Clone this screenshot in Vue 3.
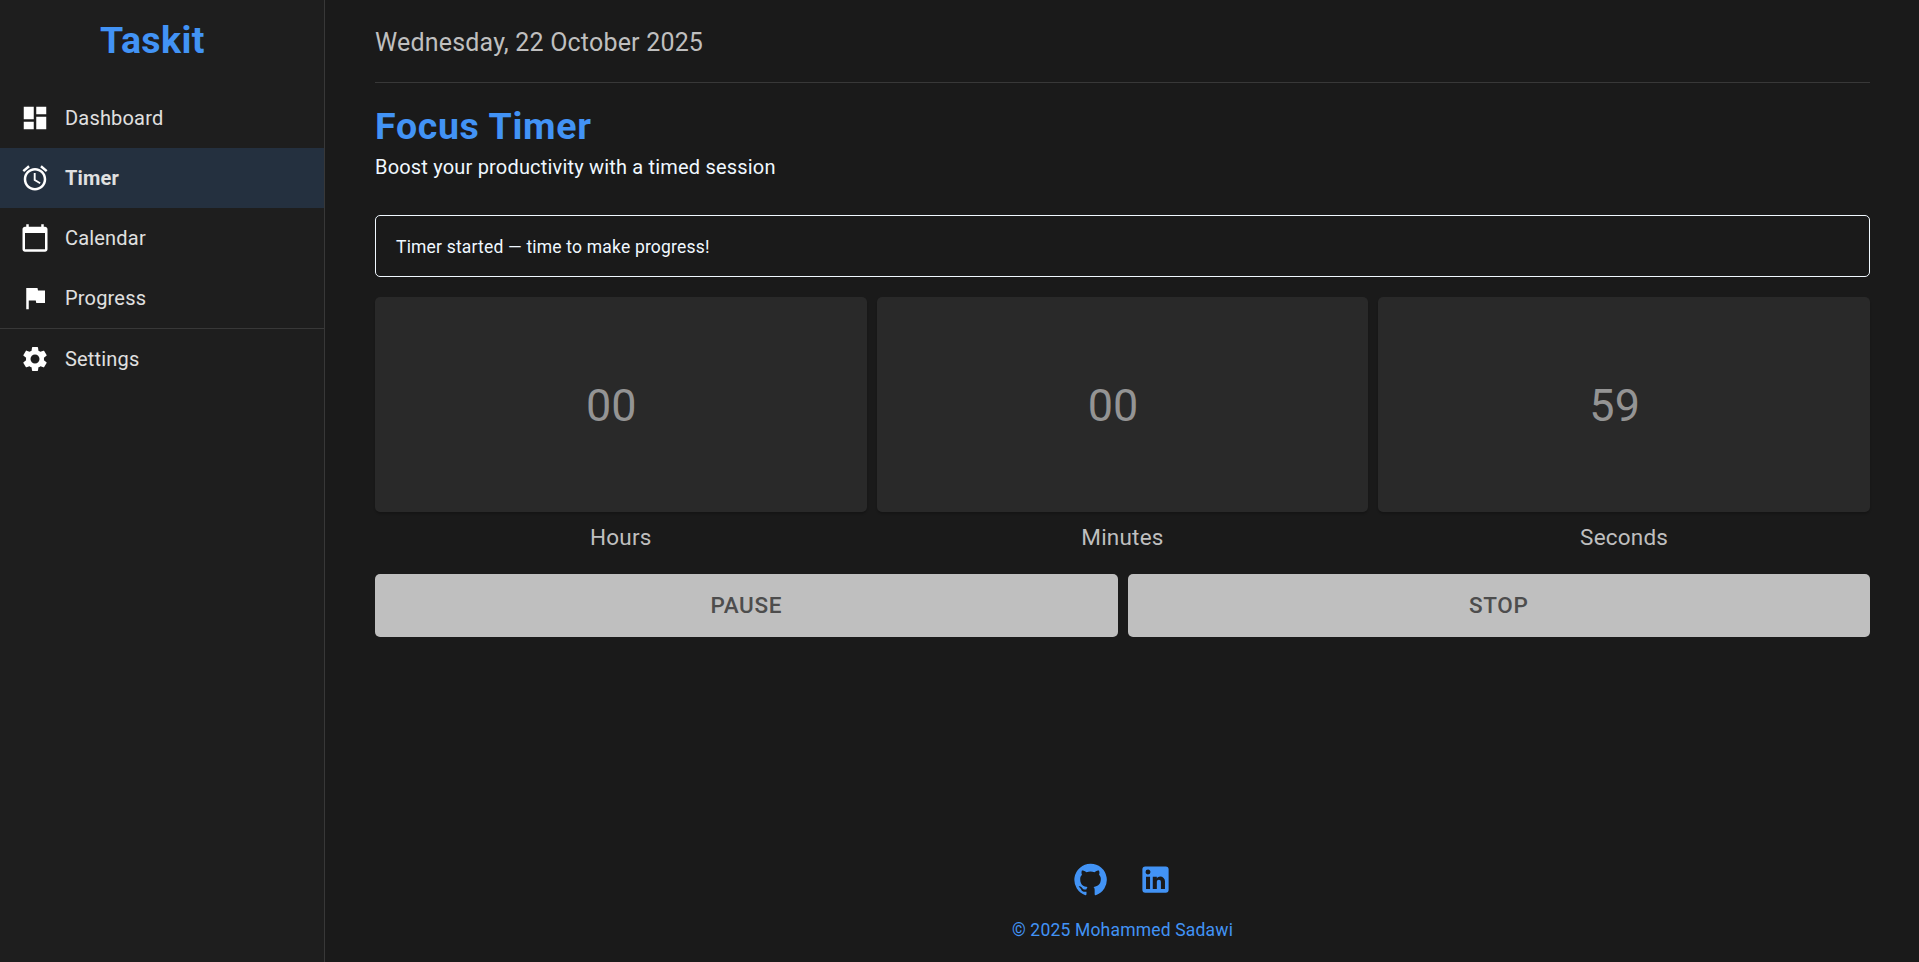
<script setup>
const items = [
  {
    label: 'Dashboard',
    path: 'M3 13h8V3H3zm0 8h8v-6H3zm10 0h8V11h-8zm0-18v6h8V3z',
  },
  {
    label: 'Timer',
    active: true,
    path: 'm22 5.72-4.6-3.86-1.29 1.53 4.6 3.86zM7.88 3.39 6.6 1.86 2 5.71l1.29 1.53zM12.5 8H11v6l4.75 2.85.75-1.23-4-2.37zM12 4c-4.97 0-9 4.03-9 9s4.02 9 9 9c4.97 0 9-4.03 9-9s-4.03-9-9-9m0 16c-3.87 0-7-3.13-7-7s3.13-7 7-7 7 3.13 7 7-3.13 7-7 7',
  },
  {
    label: 'Calendar',
    path: 'M20 3h-1V1h-2v2H7V1H5v2H4c-1.1 0-2 .9-2 2v16c0 1.1.9 2 2 2h16c1.1 0 2-.9 2-2V5c0-1.1-.9-2-2-2m0 18H4V8h16z',
  },
  {
    label: 'Progress',
    path: 'M14.4 6 14 4H5v17h2v-7h5.6l.4 2h7V6z',
  },
  {
    label: 'Settings',
    divided: true,
    path: 'M19.14 12.94c.04-.3.06-.61.06-.94 0-.32-.02-.64-.07-.94l2.03-1.58c.18-.14.23-.41.12-.61l-1.92-3.32c-.12-.22-.37-.29-.59-.22l-2.39.96c-.5-.38-1.03-.7-1.62-.94l-.36-2.54c-.04-.24-.24-.41-.48-.41h-3.84c-.24 0-.43.17-.47.41l-.36 2.54c-.59.24-1.13.57-1.62.94l-2.39-.96c-.22-.08-.47 0-.59.22L2.74 8.87c-.12.21-.08.47.12.61l2.03 1.58c-.05.3-.09.63-.09.94s.02.64.07.94l-2.03 1.58c-.18.14-.23.41-.12.61l1.92 3.32c.12.22.37.29.59.22l2.39-.96c.5.38 1.03.7 1.62.94l.36 2.54c.05.24.24.41.48.41h3.84c.24 0 .44-.17.47-.41l.36-2.54c.59-.24 1.13-.56 1.62-.94l2.39.96c.22.08.47 0 .59-.22l1.92-3.32c.12-.22.07-.47-.12-.61zM12 15.6c-1.98 0-3.6-1.62-3.6-3.6s1.62-3.6 3.6-3.6 3.6 1.62 3.6 3.6-1.62 3.6-3.6 3.6',
  },
]

const units = [
  { label: 'Hours', value: '00' },
  { label: 'Minutes', value: '00' },
  { label: 'Seconds', value: '59' },
]
</script>

<template>
  <div class="app">
    <aside class="sidebar">
      <div class="brand">Taskit</div>
      <nav class="nav">
        <a
          v-for="item in items"
          :key="item.label"
          class="nav-item"
          :class="{ active: item.active, divided: item.divided }"
        >
          <svg class="nav-icon" viewBox="0 0 24 24"><path :d="item.path" /></svg>
          <span>{{ item.label }}</span>
        </a>
      </nav>
    </aside>

    <main class="main">
      <header class="date">Wednesday, 22 October 2025</header>
      <h1 class="title">Focus Timer</h1>
      <p class="subtitle">Boost your productivity with a timed session</p>
      <div class="alert">Timer started — time to make progress!</div>

      <section class="units">
        <div v-for="unit in units" :key="unit.label" class="unit">
          <div class="card">{{ unit.value }}</div>
          <div class="unit-label">{{ unit.label }}</div>
        </div>
      </section>

      <div class="actions">
        <button class="action" type="button">PAUSE</button>
        <button class="action" type="button">STOP</button>
      </div>

      <footer class="footer">
        <div class="social">
          <svg class="social-icon" viewBox="0 0 24 24">
            <path d="M12 1.27a11 11 0 00-3.48 21.46c.55.09.73-.28.73-.55v-1.84c-3.03.64-3.67-1.46-3.67-1.46-.55-1.29-1.28-1.65-1.28-1.65-.92-.65.1-.65.1-.65 1.1 0 1.73 1.1 1.73 1.1.92 1.65 2.57 1.2 3.21.92a2 2 0 01.64-1.47c-2.47-.27-5.04-1.19-5.04-5.5 0-1.1.46-2.1 1.2-2.84a3.76 3.76 0 010-2.93s.91-.28 3.11 1.1c1.8-.49 3.7-.49 5.5 0 2.1-1.38 3.02-1.1 3.02-1.1a3.76 3.76 0 01.1 2.93c.83.74 1.2 1.74 1.2 2.94 0 4.21-2.57 5.13-5.04 5.4.45.37.82.92.82 2.02v3.03c0 .27.1.64.73.55A11 11 0 0012 1.27" />
          </svg>
          <svg class="social-icon" viewBox="0 0 24 24">
            <path d="M19 3a2 2 0 0 1 2 2v14a2 2 0 0 1-2 2H5a2 2 0 0 1-2-2V5a2 2 0 0 1 2-2zm-.5 15.5v-5.3a3.26 3.26 0 0 0-3.26-3.26c-.85 0-1.84.52-2.32 1.3v-1.11h-2.79v8.37h2.79v-4.93c0-.77.62-1.4 1.39-1.4a1.4 1.4 0 0 1 1.4 1.4v4.93zM6.88 8.56a1.68 1.68 0 0 0 1.68-1.68c0-.93-.75-1.69-1.68-1.69a1.69 1.69 0 0 0-1.69 1.69c0 .93.76 1.68 1.69 1.68m1.39 9.94v-8.37H5.5v8.37z" />
          </svg>
        </div>
        <div class="copyright">© 2025 Mohammed Sadawi</div>
      </footer>
    </main>
  </div>
</template>

<style>
body {
  margin: 0;
  background: #1a1a1a;
}
</style>

<style scoped>
.app {
  display: flex;
  height: 100vh;
  box-sizing: border-box;
  overflow: hidden;
  background: #1a1a1a;
  color: #f0f8ff;
  font-family: Roboto, "Liberation Sans", sans-serif;
}

.sidebar {
  flex: none;
  width: 325px;
  box-sizing: border-box;
  border-right: 1px solid #383838;
  background: #1e1e1e;
}

.brand {
  height: 88px;
  padding-left: 100px;
  box-sizing: border-box;
  padding-top: 10px;
  color: #4293f5;
  font-size: 37.5px;
  font-weight: 700;
  line-height: 60px;
  letter-spacing: 0.4px;
}

.nav-item {
  display: flex;
  align-items: center;
  gap: 15px;
  height: 60px;
  padding-left: 20px;
  color: #e0e0e0;
  font-size: 20px;
  letter-spacing: 0.00938em;
}

.nav-item.active {
  background: #24303f;
  font-weight: 700;
}

.nav-item.divided {
  border-top: 1px solid #383838;
}

.nav-icon {
  width: 30px;
  height: 30px;
  fill: #fff;
}

.main {
  flex: 1;
  display: flex;
  flex-direction: column;
  padding: 0 49px 0 50px;
}

.date {
  height: 83px;
  box-sizing: border-box;
  border-bottom: 1px solid #383838;
  color: #bfbfbf;
  font-size: 25px;
  line-height: 86px;
  letter-spacing: 0.0075em;
}

.title {
  margin: 20px 0 0;
  color: #4293f5;
  font-size: 37.5px;
  font-weight: 700;
  line-height: 46px;
  letter-spacing: 0.68px;
}

.subtitle {
  margin: 3px 0 0;
  font-size: 20px;
  line-height: 30px;
  letter-spacing: 0.00938em;
}

.alert {
  margin-top: 33px;
  height: 62px;
  box-sizing: border-box;
  border: 1px solid #f0f8ff;
  border-radius: 5px;
  padding: 0 20px;
  font-size: 17.5px;
  line-height: 62px;
  letter-spacing: 0.01071em;
}

.units {
  display: grid;
  grid-template-columns: repeat(3, 1fr);
  gap: 10px;
  margin-top: 20px;
}

.card {
  display: flex;
  align-items: center;
  justify-content: center;
  height: 215px;
  box-sizing: border-box;
  padding: 2px 19px 0 0;
  border-radius: 5px;
  background: #292929;
  box-shadow: 0 2px 2px rgba(0, 0, 0, 0.2);
  color: #949494;
  font-size: 45px;
}

.unit-label {
  margin-top: 8px;
  color: #bfbfbf;
  font-size: 22.5px;
  line-height: 34px;
  letter-spacing: 0.00938em;
  text-align: center;
}

.actions {
  display: grid;
  grid-template-columns: 1fr 1fr;
  gap: 10px;
  margin-top: 20px;
}

.action {
  height: 63px;
  padding: 0 0 2px;
  border: 0;
  border-radius: 5px;
  background: #bfbfbf;
  color: #4d4d4d;
  font-family: inherit;
  font-size: 22.5px;
  font-weight: 500;
  letter-spacing: 0.02857em;
}

.footer {
  margin-top: auto;
  padding-bottom: 19px;
  color: #4293f5;
  text-align: center;
}

.social {
  display: flex;
  justify-content: center;
  gap: 30px;
}

.social-icon {
  width: 35px;
  height: 35px;
  fill: currentColor;
}

.copyright {
  margin-top: 20px;
  font-size: 17.5px;
  line-height: 26px;
  letter-spacing: 0.01071em;
}
</style>
